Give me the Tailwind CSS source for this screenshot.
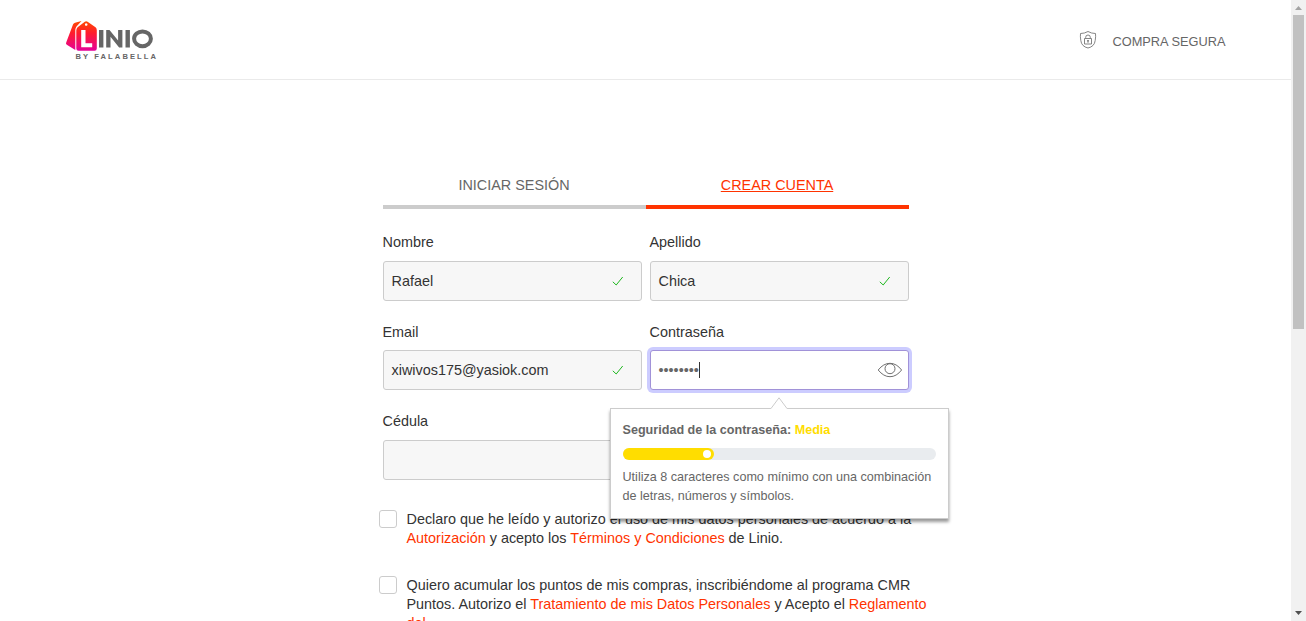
<!DOCTYPE html>
<html lang="es">
<head>
<meta charset="utf-8">
<title>Linio - Crear cuenta</title>
<script src="https://cdn.jsdelivr.net/npm/@tailwindcss/browser@4"></script>
</head>
<body class="flex h-[621px] w-full overflow-hidden bg-white font-['Liberation_Sans',Arial,sans-serif] text-[14.4px] leading-[19px] text-[#333]">
<div class="h-full min-w-0 flex-1 overflow-hidden">
  <header class="flex h-20 items-start justify-between border-b border-[#eaeaea] pr-[65.5px] pl-16">
    <svg class="mt-4 h-12 w-[100px]" viewBox="0 0 100 48" role="img" aria-label="Linio by Falabella">
      <defs>
        <linearGradient id="tag" gradientUnits="userSpaceOnUse" x1="0" y1="5" x2="0" y2="35"><stop offset="0" stop-color="#ff4a00"/><stop offset=".4" stop-color="#ff1d2d"/><stop offset="1" stop-color="#e5009b"/></linearGradient>
      </defs>
      <path d="M9 8.500q.5-1.300 2-1.800L17.500 5l-5 5.500q-1.200 1.500-1.200 3.500v20L2.800 28.700Q1.500 28 2.200 26.500z" fill="url(#tag)"/>
      <path fill-rule="evenodd" d="M12.300 14.500q0-2 1.300-3.200l7.200-5.600q1.400-1 2.800 0l7.900 5.600q1.300 1 1.300 3v18.200q0 2.200-2.200 2.200H14.500q-2.200 0-2.200-2.200zM22.200 7.200a1.300 1.300 0 1 0 .01 0z" fill="url(#tag)"/>
      <path d="M17.200 14h4.300v13.200h6.700v4.100h-11z" fill="#fff"/>
      <path d="M35 14h4.400V31.500H35zM42.200 31.500V14h3.300l8.600 10.600V14h4.300V31.500h-3.300l-8.600-10.700v10.700zM61.500 14h4.400V31.500h-4.400z" fill="#666"/>
      <ellipse cx="78.500" cy="22.800" rx="8.400" ry="7.400" fill="none" stroke="#666" stroke-width="4"/>
      <text x="11.500" y="43" textLength="80.500" lengthAdjust="spacing" font-family="Liberation Sans, sans-serif" font-size="7.600" font-weight="700" fill="#666">BY FALABELLA</text>
    </svg>
    <div class="mt-[30px] flex items-start text-[#666]">
      <svg class="mr-[15px] h-5 w-[18px]" viewBox="0 0 18 20" fill="none" stroke="#777" stroke-width=".9">
        <path d="M9 1.500Q12.500 3.500 16.500 3.500q.4 3-.3 7-.7 6-7.200 7.500-6.500-1.500-7.200-7.500-.7-4-.3-7Q5.500 3.500 9 1.500z"/>
        <path d="M5.500 8.500h7v5.500h-7zM6.700 8.500v-1.200q0-2.300 2.300-2.300t2.300 2.300v1.200M9 10.500v2.300"/>
        <circle cx="9" cy="10.800" r=".5" fill="#666"/>
      </svg>
      <span class="mt-[2px] text-[12.8px] leading-[19px]">COMPRA SEGURA</span>
    </div>
  </header>

  <main class="mx-auto mt-[95px] w-[526px]">
    <nav class="grid h-[34px] grid-cols-2 text-center">
      <a class="border-b-4 border-[#ccc] pt-px text-[#666]">INICIAR SESIÓN</a>
      <a class="border-b-4 border-[#ff3300] pt-px text-[#ff3300] underline">CREAR CUENTA</a>
    </nav>
    <form class="mt-6 grid grid-cols-2 gap-x-2">
      <div class="h-[89.500px]">
        <label class="block h-7">Nombre</label>
        <div class="flex h-10 items-center justify-between rounded-[3px] border border-[#ccc] bg-[#f7f7f7] pr-[17px] pl-2"><span>Rafael</span>
          <svg class="h-3 w-3" viewBox="0 0 12 12" fill="none" stroke="#20b820"><path d="M.8 6.800 4.200 10 10.700 2"/></svg></div>
      </div>
      <div class="h-[89.500px]">
        <label class="block h-7">Apellido</label>
        <div class="flex h-10 items-center justify-between rounded-[3px] border border-[#ccc] bg-[#f7f7f7] pr-[17px] pl-2"><span>Chica</span>
          <svg class="h-3 w-3" viewBox="0 0 12 12" fill="none" stroke="#20b820"><path d="M.8 6.800 4.200 10 10.700 2"/></svg></div>
      </div>
      <div class="h-[89.500px]">
        <label class="block h-[27.500px]">Email</label>
        <div class="flex h-10 items-center justify-between rounded-[3px] border border-[#ccc] bg-[#f7f7f7] pr-[17px] pl-2"><span>xiwivos175@yasiok.com</span>
          <svg class="h-3 w-3" viewBox="0 0 12 12" fill="none" stroke="#20b820"><path d="M.8 6.800 4.200 10 10.700 2"/></svg></div>
      </div>
      <div class="relative h-[89.500px]">
        <label class="block h-[27.500px]">Contraseña</label>
        <div class="flex h-10 items-center justify-between rounded-[3px] border border-[#a192d8] bg-white pr-[5.500px] pl-2 text-[#666] shadow-[0_0_0_3px_#ccccff]">
          <span class="flex items-center">••••••••<i class="h-4 w-px bg-[#333]"></i></span>
          <svg class="h-4 w-[25px]" viewBox="0 0 25 16" fill="none" stroke="#707070"><path d="M1.200 8Q6.500 1.300 13 1.300T24.600 8Q19.500 14.700 13 14.700T1.200 8z"/><circle cx="13" cy="6.700" r="5"/></svg>
        </div>
        <aside class="absolute top-[85.500px] left-[-40px] z-10 h-[111px] w-[339px] border border-[#ccc] bg-white px-3 pt-3 text-[12.6px] text-[#666] shadow-[0_3px_3px_0_rgba(0,0,0,0.4)]">
          <svg class="absolute -top-[12.500px] left-[159.500px] h-[13px] w-[18px]" viewBox="0 0 18 13"><path d="M0 13 1 11.500 9 .8 17 11.500 18 13z" fill="#fff"/><path d="M.5 11.500H1L9 .8l8 10.700h.5" fill="none" stroke="#ccc"/></svg>
          <p class="font-bold">Seguridad de la contraseña: <span class="text-[#ffdd00]">Media</span></p>
          <div class="mt-2 h-3 rounded-full bg-[#e9ecef]"><div class="flex h-3 w-[91px] items-center justify-end rounded-full bg-[#ffdd00] pr-[3px]"><i class="size-2 rounded-full bg-white"></i></div></div>
          <p class="mt-[8px] whitespace-nowrap">Utiliza 8 caracteres como mínimo con una combinación<br>de letras, números y símbolos.</p>
        </aside>
      </div>
      <div class="h-[98px]">
        <label class="block h-7">Cédula</label>
        <div class="h-10 rounded-[3px] border border-[#ccc] bg-[#f7f7f7]"></div>
      </div>
    </form>
    <section class="-ml-1 flex w-[570px] flex-col gap-[27.500px]">
      <div class="flex gap-[10px]"><i class="size-[18px] shrink-0 rounded-[3px] border border-[#ccc] bg-white"></i>
        <p class="whitespace-nowrap">Declaro que he leído y autorizo el uso de mis datos personales de acuerdo a la<br><a class="text-[#ff3300]">Autorización</a> y acepto los <a class="text-[#ff3300]">Términos y Condiciones</a> de Linio.</p></div>
      <div class="flex gap-[10px]"><i class="size-[18px] shrink-0 rounded-[3px] border border-[#ccc] bg-white"></i>
        <p class="leading-[19.400px] whitespace-nowrap">Quiero acumular los puntos de mis compras, inscribiéndome al programa CMR<br>Puntos. Autorizo el <a class="text-[#ff3300]">Tratamiento de mis Datos Personales</a> y Acepto el <a class="text-[#ff3300]">Reglamento<br>del</a></p></div>
    </section>
  </main>
</div>
<div class="flex h-full w-[15px] flex-col items-center bg-[#f1f1f1]">
  <svg class="h-[15px] w-[15px] shrink-0" viewBox="0 0 15 15"><path d="M4 10 7.500 6 11 10z" fill="#a3a3a3"/></svg>
  <div class="h-[314px] w-[11px] shrink-0 bg-[#c1c1c1]"></div>
  <svg class="mt-auto h-[15px] w-[15px] shrink-0" viewBox="0 0 15 15"><path d="M4 5 7.500 9 11 5z" fill="#505050"/></svg>
</div>
</body>
</html>
